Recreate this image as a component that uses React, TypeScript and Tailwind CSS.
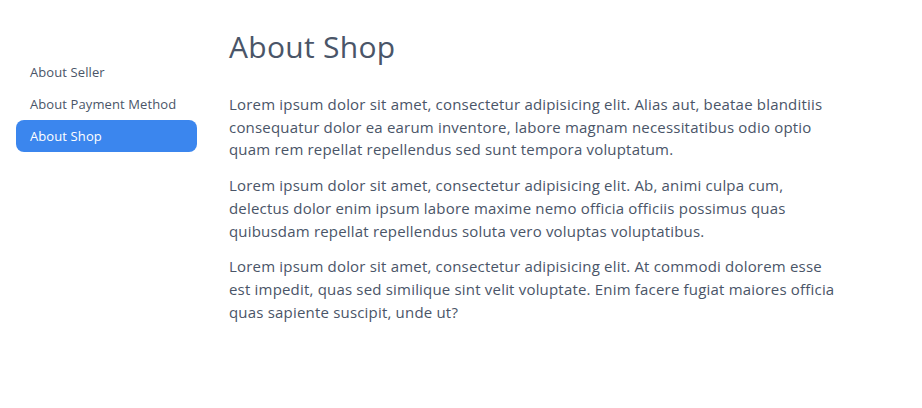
import React from "react";

const navItems = ["About Seller", "About Payment Method", "About Shop"];

const paragraphs = [
  [
    "Lorem ipsum dolor sit amet, consectetur adipisicing elit. Alias aut, beatae blanditiis",
    "consequatur dolor ea earum inventore, labore magnam necessitatibus odio optio",
    "quam rem repellat repellendus sed sunt tempora voluptatum.",
  ],
  [
    "Lorem ipsum dolor sit amet, consectetur adipisicing elit. Ab, animi culpa cum,",
    "delectus dolor enim ipsum labore maxime nemo officia officiis possimus quas",
    "quibusdam repellat repellendus soluta vero voluptas voluptatibus.",
  ],
  [
    "Lorem ipsum dolor sit amet, consectetur adipisicing elit. At commodi dolorem esse",
    "est impedit, quas sed similique sint velit voluptate. Enim facere fugiat maiores officia",
    "quas sapiente suscipit, unde ut?",
  ],
];

export default function App() {
  return (
    <div className="min-h-screen bg-white font-['Open_Sans',sans-serif] text-[#4a5568]">
      <div className="flex gap-8 pl-4 pt-[29px]">
        {/* Sidebar */}
        <nav className="w-[181px] shrink-0 pt-[27px]">
          {navItems.map((item) => {
            const active = item === "About Shop";
            return (
              <div
                key={item}
                className={
                  "h-8 flex items-center px-[14px] pt-[2px] rounded-lg text-[13px] tracking-[0.1px] " +
                  (active ? "bg-[#3b86ee] text-white" : "text-[#4a5568]")
                }
              >
                {item}
              </div>
            );
          })}
        </nav>

        {/* Content */}
        <main className="flex-1">
          <h1 className="text-3xl leading-9 tracking-[0.3px] text-[#4a5568]">About Shop</h1>
          <div className="mt-[28px] space-y-[13px] text-[15px] leading-[22.7px] tracking-[0.19px]">
            {paragraphs.map((lines, i) => (
              <p key={i}>
                {lines.map((l, j) => (
                  <span key={j} className="block whitespace-nowrap">
                    {l}
                  </span>
                ))}
              </p>
            ))}
          </div>
        </main>
      </div>
    </div>
  );
}
